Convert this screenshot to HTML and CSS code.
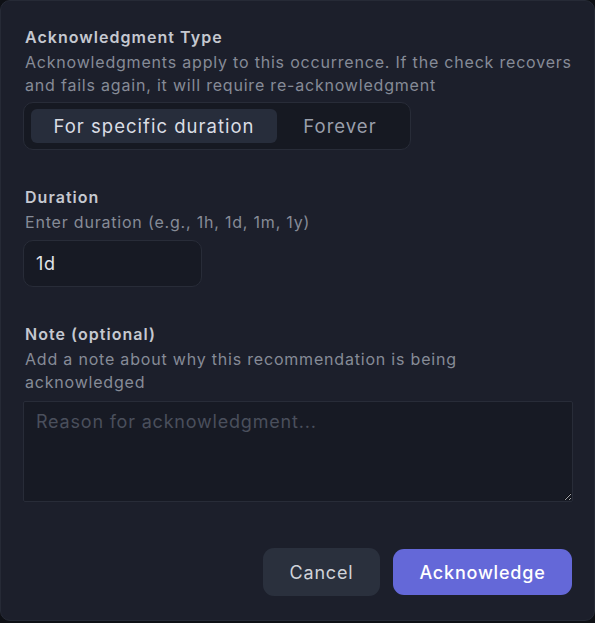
FILE: index.html
```html
<!DOCTYPE html>
<html lang="en">
<head>
<meta charset="utf-8">
<title>Acknowledge</title>
<link rel="stylesheet" href="styles.css">
</head>
<body>
<div class="dialog">
  <section class="field first">
    <div class="label">Acknowledgment Type</div>
    <div class="hint">Acknowledgments apply to this occurrence. If the check recovers and fails again, it will require re-acknowledgment</div>
    <div class="segmented">
      <button class="seg active">For specific duration</button>
      <button class="seg">Forever</button>
    </div>
  </section>
  <section class="field">
    <div class="label">Duration</div>
    <div class="hint">Enter duration (e.g., 1h, 1d, 1m, 1y)</div>
    <input class="input" type="text" value="1d">
  </section>
  <section class="field">
    <div class="label">Note (optional)</div>
    <div class="hint narrow">Add a note about why this recommendation is being acknowledged</div>
    <textarea class="textarea" placeholder="Reason for acknowledgment..."></textarea>
  </section>
  <div class="actions">
    <button class="btn cancel">Cancel</button>
    <button class="btn primary">Acknowledge</button>
  </div>
</div>
</body>
</html>
```

FILE: styles.css
```css
* { box-sizing: border-box; }
html, body {
  margin: 0;
  padding: 0;
  background: #0e1015;
  font-family: Inter, "Noto Sans", sans-serif;
  letter-spacing: 0.05em;
}
.dialog {
  width: 595px;
  height: 621px;
  background: #1c1f2b;
  border: 1px solid #262a36;
  border-radius: 10px;
  padding: 25px 22px 0 22px;
  display: flex;
  flex-direction: column;
}
.field { display: flex; flex-direction: column; margin-top: 36px; }
.field.first { margin-top: 0; }
.label {
  color: #c5c8d0;
  font-weight: 600;
  font-size: 16px;
  line-height: 22px;
  padding-left: 2px;
  letter-spacing: 0.065em;
}
.hint {
  color: #868b97;
  font-size: 16px;
  line-height: 23px;
  padding-left: 2px;
  margin-top: 3px;
}
.hint.narrow { max-width: 470px; }
.segmented {
  margin-top: 5px;
  align-self: flex-start;
  display: flex;
  width: 388px;
  height: 48px;
  padding: 6px 7px;
  background: #161922;
  border: 1px solid #282c38;
  border-radius: 10px;
}
.seg {
  border: 0;
  background: transparent;
  color: #9a9fab;
  font-family: inherit;
  font-size: 18.5px;
  letter-spacing: 0.055em;
  padding: 0;
  border-radius: 6px;
  height: 34px;
  cursor: pointer;
}
.seg.active {
  width: 246px;
  background: #272d3b;
  color: #dadde4;
}
.seg:not(.active) { flex: 1; }
.input {
  margin-top: 6px;
  width: 179px;
  height: 47px;
  background: #171a24;
  border: 1px solid #282c38;
  border-radius: 10px;
  color: #e1e4ea;
  font-family: inherit;
  letter-spacing: inherit;
  font-size: 18px;
  padding: 0 12px;
  outline: none;
}
.textarea {
  margin-top: 7px;
  width: 550px;
  height: 101px;
  background: #171a24;
  border: 1px solid #282c38;
  border-radius: 2px;
  color: #e1e4ea;
  font-family: inherit;
  letter-spacing: inherit;
  font-size: 18px;
  line-height: 24px;
  padding: 8px 12px;
  outline: none;
  color-scheme: dark;
}
.textarea::placeholder { color: #4a4f5c; }
.actions {
  margin-top: 46px;
  display: flex;
  justify-content: flex-end;
  gap: 13px;
}
.btn {
  border: 0;
  font-family: inherit;
  letter-spacing: inherit;
  font-size: 18px;
  height: 48px;
  border-radius: 11px;
  cursor: pointer;
}
.cancel {
  width: 117px;
  background: #2a303d;
  color: #cfd2d9;
}
.primary {
  width: 179px;
  height: 46px;
  margin-top: 1px;
  background: #6468d8;
  color: #ffffff;
  font-weight: 500;
}
```
